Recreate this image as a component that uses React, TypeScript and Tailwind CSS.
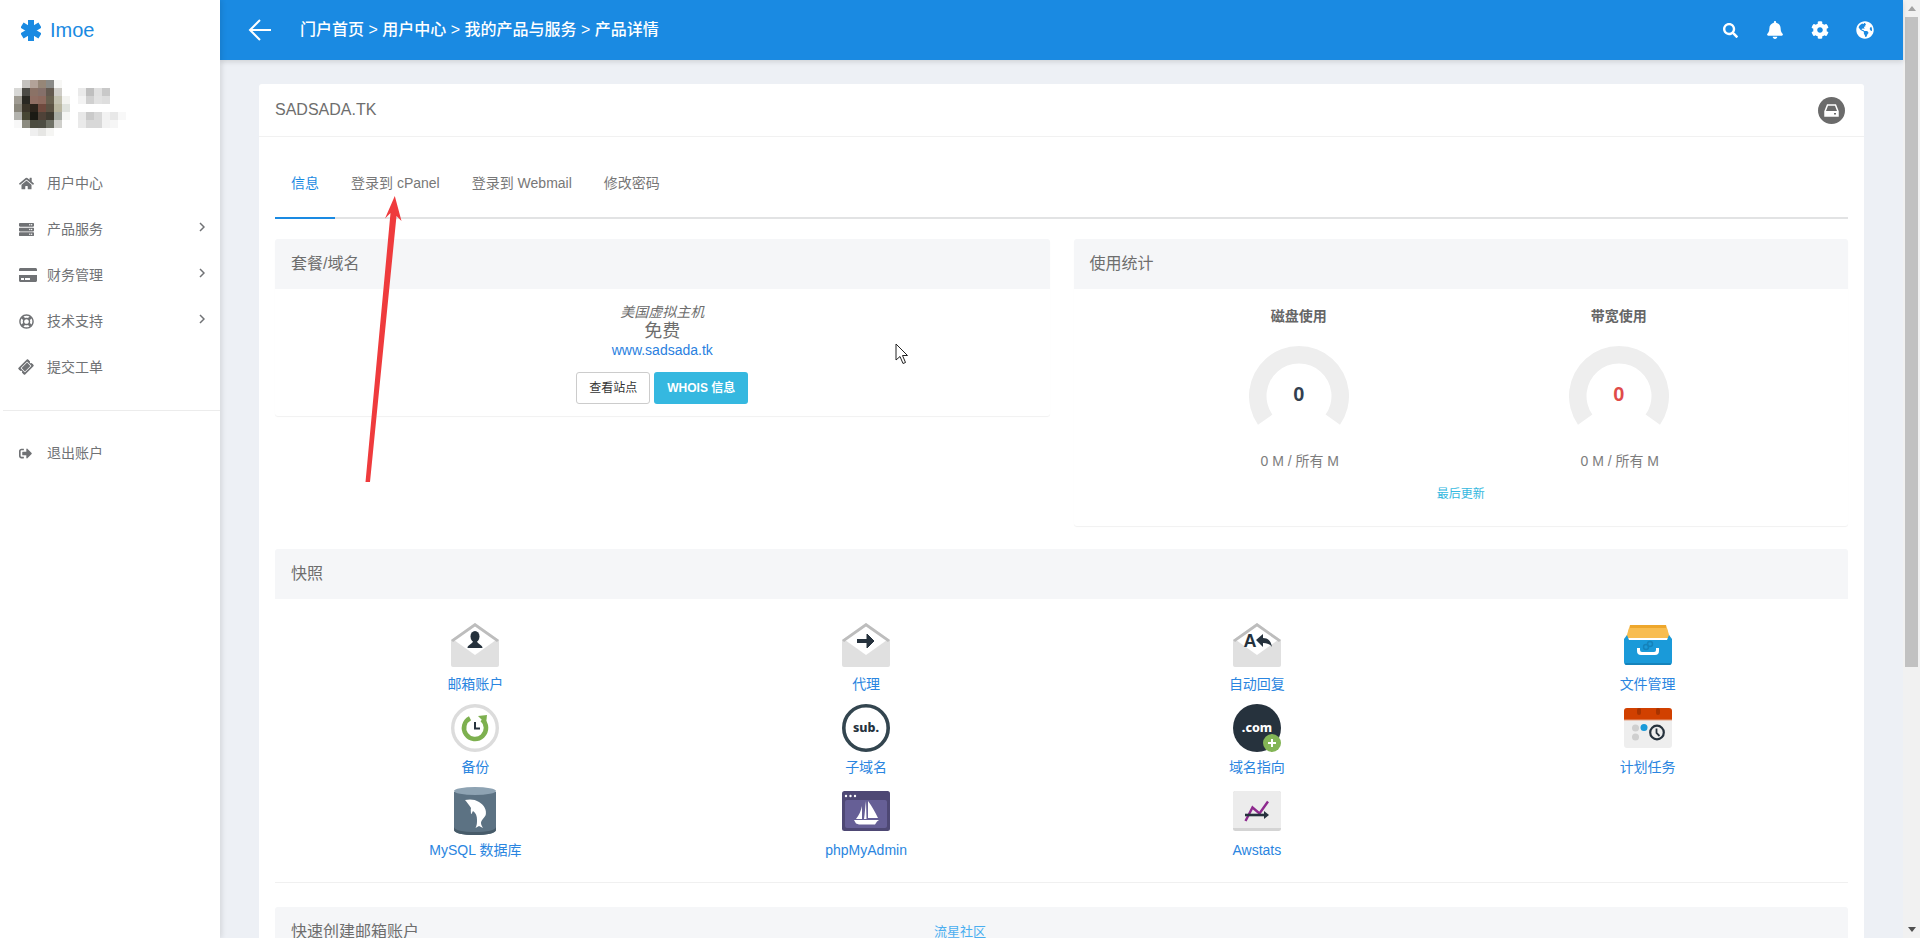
import React from "react";
import {
  FaBell, FaCog, FaCreditCard, FaGlobeAmericas, FaHome,
  FaRegLifeRing, FaSearch, FaServer, FaSignOutAlt, FaTicketAlt,
} from "react-icons/fa";

const avatar: [number, string[]][] = [
  [22, ["#c4c2bf", "#b3a298", "#968677", "#8a8a87", "#f7f7f5"]],
  [14, ["#d8d8d6", "#4c4b46", "#8b7266", "#85706a", "#63594f", "#cfcdc8"]],
  [14, ["#9f9b92", "#292822", "#8f6e63", "#8d6a5e", "#68604f", "#c3c1b0", "#f3f3f0"]],
  [14, ["#8a877c", "#3b3529", "#2c241c", "#6f4a3e", "#5b5243", "#b9b6a0", "#dfe2dd"]],
  [14, ["#b3b3ae", "#474633", "#1b1a14", "#4f4238", "#3f3b31", "#a8aca4", "#f5f6f3"]],
  [14, ["#f8f8f8", "#8c8b80", "#4c4c40", "#4d4d43", "#6f7166", "#d0d0cc"]],
  [30, ["#efefef", "#e6e6e4", "#f5f5f3"]],
];
const nameRows: [number, string[]][] = [
  [88, ["#eaeaea", "#bfbfbf", "#e0e0e0", "#c9c9c9"]],
  [96, ["#f3f3f3", "#d0d0d0", "#e2e2e2", "#dedede"]],
  [112, ["#e8e8e8", "#cacaca", "#d8d8d8", "#f2f2f2", "#e8e8e8", "#f8f8f8"]],
  [120, ["#eaeaea", "#d8d8d8", "#d8d8d8", "#f2f2f2", "#f6f6f6"]],
];

function Mosaic() {
  return (
    <svg width="120" height="64" viewBox="14 80 120 64" shapeRendering="crispEdges">
      {avatar.map(([x0, cols], r) =>
        cols.map((c, i) => <rect key={`${r}-${i}`} x={x0 + i * 8} y={80 + r * 8} width="8" height="8" fill={c} />),
      )}
      {nameRows.map(([y, cols]) =>
        cols.map((c, i) => <rect key={`${y}-${i}`} x={78 + i * 8} y={y} width="8" height="8" fill={c} />),
      )}
    </svg>
  );
}

const NAV = [
  { label: "用户中心", icon: <FaHome size={15} />, more: false },
  { label: "产品服务", icon: <FaServer size={15} />, more: true },
  { label: "财务管理", icon: <FaCreditCard size={18} />, more: true },
  { label: "技术支持", icon: <FaRegLifeRing size={15} />, more: true },
  { label: "提交工单", icon: <FaTicketAlt size={14} className="-rotate-45" />, more: false },
];

function NavRow({ label, icon, more }: { label: string; icon: React.ReactNode; more: boolean }) {
  return (
    <div className="flex h-[46px] items-center pl-[19px] pr-[15px] text-[14px] text-[#707275]">
      <span className="flex w-[28px] shrink-0 items-center">{icon}</span>
      <span className="flex-1">{label}</span>
      {more && (
        <svg width="6" height="10" viewBox="0 0 6 10" fill="none" stroke="currentColor" strokeWidth="1.500" className="-mt-[4px]">
          <path d="M1 1l4 4-4 4" />
        </svg>
      )}
    </div>
  );
}

function Sidebar() {
  return (
    <aside className="z-20 h-full w-[220px] shrink-0 bg-white shadow-[2px_0_5px_rgba(0,0,0,0.1)]">
      <div className="flex h-[60px] items-center pl-[21px] text-[#1a8ae2]">
        <svg width="20" height="21" viewBox="0 0 20 21" fill="none" stroke="currentColor" strokeWidth="6">
          <path d="M10 0v21M1 5l18 11M19 5 1 16" />
        </svg>
        <span className="ml-[9px] text-[20px]">Imoe</span>
      </div>
      <div className="h-[100px] pl-[14px] pt-[20px]">
        <Mosaic />
      </div>
      {NAV.map((n) => (
        <NavRow key={n.label} {...n} />
      ))}
      <div className="ml-[3px] mt-[20px] border-t border-[#ececec]" />
      <div className="mt-[19px]">
        <NavRow label="退出账户" icon={<FaSignOutAlt size={13} />} more={false} />
      </div>
    </aside>
  );
}

function Header() {
  return (
    <header className="z-10 flex h-[60px] shrink-0 items-center bg-[#1a8ae2] pl-[28px] pr-[29px] text-white shadow-[0_2px_5px_rgba(0,0,0,0.12)]">
      <svg width="24" height="24" viewBox="0 0 24 24" fill="none" stroke="white" strokeWidth="2">
        <path d="M23 12H2M12 2 2 12l10 10" />
      </svg>
      <span className="ml-[28px] flex-1 text-[16px] font-medium">门户首页 &gt; 用户中心 &gt; 我的产品与服务 &gt; 产品详情</span>
      <div className="flex items-center">
        <FaSearch size={15} />
        <FaBell size={18} className="ml-[28px]" />
        <FaCog size={18} className="ml-[27px]" />
        <FaGlobeAmericas size={18} className="ml-[27px]" />
      </div>
    </header>
  );
}

function PanelHead({ children }: { children: React.ReactNode }) {
  return <div className="flex h-[50px] items-center rounded-t-[3px] bg-[#f5f6f8] px-[16px] text-[16px] text-[#6e6e6e]">{children}</div>;
}

function Gauge({ title, valueClass }: { title: string; valueClass: string }) {
  return (
    <div className="flex w-[320px] flex-col items-center">
      <div className="text-[14px] font-bold leading-[20px] text-[#666]">{title}</div>
      <div className="relative mt-[20px] h-[79px] w-[100px]">
        <svg width="100" height="79" viewBox="0 0 100 79">
          <path d="M9 78.700 A50 50 0 1 1 91 78.700 L76.600 68.600 A32.500 32.500 0 1 0 23.400 68.600 Z" fill="#eeeeee" />
        </svg>
        <span className={`absolute left-0 top-[36px] w-full text-center text-[20px] font-bold leading-[24px] ${valueClass}`}>0</span>
      </div>
      <div className="ml-[2px] mt-[26px] text-[14px] leading-[20px] text-[#7d7d7d]">0 M / 所有 M</div>
    </div>
  );
}

const Env = ({ children }: { children: React.ReactNode }) => (
  <svg width="48" height="48" viewBox="0 0 48 48">
    <path d="M0 19 24 2l24 17v25a2 2 0 0 1-2 2H2a2 2 0 0 1-2-2Z" fill="#e0e0e0" />
    <path d="M3 19 24 5l21 14-21 15Z" fill="#fff" />
    <path d="M0 19 24 2l24 17-2 2L24 5.500 2 21Z" fill="#bdbdbd" />
    {children}
  </svg>
);

const D = "#26323d";

const icons: Record<string, React.ReactNode> = {
  mail: (
    <Env>
      <ellipse cx="24" cy="15.500" rx="4.500" ry="5.500" fill={D} />
      <path d="M16.500 27c0-3.500 5-3.500 5.500-7h4c.5 3.500 5.500 3.500 5.500 7Z" fill={D} />
    </Env>
  ),
  fwd: (
    <Env>
      <rect x="15" y="18" width="12" height="4" fill={D} />
      <path d="M25 13l7 7-7 7Z" fill={D} stroke={D} strokeLinejoin="round" />
    </Env>
  ),
  auto: (
    <Env>
      <text x="10.500" y="26" fontFamily="'Liberation Sans'" fontWeight="700" fontSize="18" fill={D}>A</text>
      <path d="M23 19l7-6v4c5 0 8 3 9 9-2-3-5-4-9-4v4Z" fill={D} />
    </Env>
  ),
  files: (
    <svg width="48" height="48" viewBox="0 0 48 48">
      <path d="M6 4h36l2 8H4Z" fill="#eea72c" />
      <path d="M5 7h38l3 10H2Z" fill="#f8bd50" />
      <path d="M3 14l2 5h38l2-5 3 4v23a3 3 0 0 1-3 3H3a3 3 0 0 1-3-3V18Z" fill="#1a9ad9" />
      <path d="M1 42h46l-.5 2h-45Z" fill="#1583bb" />
      <path d="M13 27v3a4 4 0 0 0 4 4h14a4 4 0 0 0 4-4v-3h-3v2a2 2 0 0 1-2 2H18a2 2 0 0 1-2-2v-2Z" fill="#fff" />
      <circle cx="22" cy="26" r="2.500" fill="none" stroke="#1583bb" strokeWidth="1.500" />
      <circle cx="26" cy="23" r="2.500" fill="none" stroke="#1583bb" strokeWidth="1.500" />
    </svg>
  ),
  backup: (
    <svg width="48" height="48" viewBox="0 0 48 48">
      <circle cx="24" cy="24" r="22.300" fill="#fff" stroke="#dcdcdc" strokeWidth="3.400" />
      <path d="M31 15.500A11 11 0 1 1 19 14.200" fill="none" stroke="#7db04f" strokeWidth="4.600" />
      <path d="M27 12l9-1-1 9Z" fill="#7db04f" />
      <path d="M24 18v6.500h5" fill="none" stroke={D} strokeWidth="2" />
    </svg>
  ),
  sub: (
    <svg width="48" height="48" viewBox="0 0 48 48">
      <circle cx="24" cy="24" r="22.200" fill="#fff" stroke="#33454f" strokeWidth="3.600" />
      <text x="24" y="27.500" textAnchor="middle" fontFamily="'Noto Sans'" fontWeight="800" fontSize="12.500" fill={D}>sub.</text>
    </svg>
  ),
  com: (
    <svg width="48" height="48" viewBox="0 0 48 48">
      <circle cx="24" cy="24" r="24" fill={D} />
      <text x="24" y="28" textAnchor="middle" fontFamily="'Noto Sans'" fontWeight="800" fontSize="12.500" fill="#fff">.com</text>
      <circle cx="39" cy="39" r="9" fill="#83b556" />
      <path d="M39 35v8M35 39h8" stroke="#fff" strokeWidth="2" />
    </svg>
  ),
  cron: (
    <svg width="48" height="48" viewBox="0 0 48 48">
      <rect y="4" width="48" height="40" rx="3" fill="#eeeeee" />
      <path d="M0 16V7a3 3 0 0 1 3-3h42a3 3 0 0 1 3 3v9Z" fill="#d14000" />
      <rect x="0" y="15.500" width="48" height="1" fill="#e8a080" />
      <rect x="13" y="4" width="4" height="7" rx="2" fill="#a83300" />
      <rect x="32" y="4" width="4" height="7" rx="2" fill="#a83300" />
      <circle cx="11.500" cy="24" r="3.500" fill="#cfcfcf" />
      <circle cx="20" cy="23.500" r="3.500" fill="#1a9ad9" />
      <circle cx="11.500" cy="33" r="3.500" fill="#cfcfcf" />
      <circle cx="33" cy="28.500" r="6.800" fill="none" stroke={D} strokeWidth="2.200" />
      <path d="M32.500 24.500v4.500l3 3" fill="none" stroke={D} strokeWidth="1.800" />
    </svg>
  ),
  mysql: (
    <svg width="48" height="48" viewBox="0 0 48 48">
      <path d="M3 5h42v38c0 3-9 5-21 5S3 46 3 43Z" fill="#5c7283" />
      <path d="M3 40c0 3 9 5 21 5s21-2 21-5v3c0 3-9 5-21 5S3 46 3 43Z" fill="#475b69" />
      <ellipse cx="24" cy="4" rx="21" ry="4" fill="#8ea3b3" />
      <path d="M14 13C18 12 24 12 28 15C33 18 36 23 34.700 28C33.500 31 30 33 30 36C30 38 31 39 32 41L28 39L24.500 41C26 38 26 36 26 33C26 29 25 26 22 24C21 25 21 27 20 27C20 25 19.500 23 20 21C18 18 16 15 14 13Z" fill="#fff" />
    </svg>
  ),
  pma: (
    <svg width="48" height="48" viewBox="0 0 48 48">
      <rect y="4" width="48" height="40" rx="2.500" fill="#4e4874" />
      <rect x="3" y="13" width="42" height="28" rx="2" fill="#665f96" />
      <circle cx="4" cy="9" r="1.200" fill="#fff" />
      <circle cx="8.500" cy="9" r="1.200" fill="#fff" />
      <circle cx="13" cy="9" r="1.200" fill="#fff" />
      <path d="M14 32c3-4 5-8 6-13v13ZM22 32c1-6 1-12 2-18l.5 18ZM26 14c4 5 7 11 10 17H26Z" fill="#fff" />
      <path d="M12 33h25l-2 1.500-2 3H17l-3-1Z" fill="#fff" />
    </svg>
  ),
  aw: (
    <svg width="48" height="48" viewBox="0 0 48 48">
      <rect y="4" width="48" height="40" rx="2.500" fill="#d4d4d4" />
      <path d="M0 6.500A2.500 2.500 0 0 1 2.500 4h43A2.500 2.500 0 0 1 48 6.500V41H0Z" fill="#ececec" />
      <path d="M12.500 34l7-13.500 7 6 8.500-12" fill="none" stroke="#8e2a8e" strokeWidth="2.400" />
      <path d="M12 28h20" stroke={D} strokeWidth="2.600" />
      <path d="M31 24l5 4-5 4Z" fill={D} />
    </svg>
  ),
};

const TILES = [
  ["mail", "邮箱账户"], ["fwd", "代理"], ["auto", "自动回复"], ["files", "文件管理"],
  ["backup", "备份"], ["sub", "子域名"], ["com", "域名指向"], ["cron", "计划任务"],
  ["mysql", "MySQL 数据库"], ["pma", "phpMyAdmin"], ["aw", "Awstats"],
];

function Card() {
  return (
    <div className="rounded-[3px] bg-white pb-[20px]">
      <div className="flex h-[53px] items-center justify-between border-b border-[#f1f1f1] pl-[16px] pr-[19px]">
        <span className="text-[16px] text-[#6e6e6e]">SADSADA.TK</span>
        <span className="flex h-[27px] w-[27px] items-center justify-center rounded-full bg-[#6b6b6b]">
          <svg width="15" height="13" viewBox="0 0 15 13">
            <path d="M3.500 1h8l2.500 6.500v4.500H1V7.500Z" fill="none" stroke="#fff" strokeWidth="1.500" />
            <rect x="1" y="7" width="13" height="5" fill="#fff" />
            <rect x="10" y="9" width="2" height="1.500" fill="#6b6b6b" />
          </svg>
        </span>
      </div>
      <div className="px-[16px]">
        <div className="mt-[23px] flex border-b-2 border-[#e2e3e4] text-[14px] text-[#777]">
          <span className="-mb-[2px] border-b-[2px] border-[#1a8ae2] px-[16px] pb-[23px] pt-[12px] leading-[22px] text-[#1a8ae2]">信息</span>
          <span className="px-[16px] pt-[12px] leading-[22px]">登录到 cPanel</span>
          <span className="px-[16px] pt-[12px] leading-[22px]">登录到 Webmail</span>
          <span className="px-[16px] pt-[12px] leading-[22px]">修改密码</span>
        </div>

        <div className="mt-[20px] flex items-start gap-[24px]">
          <section className="flex-1 rounded-[3px] shadow-[0_1px_1px_rgba(0,0,0,0.06)]">
            <PanelHead>套餐/域名</PanelHead>
            <div className="flex flex-col items-center pb-[12px] pt-[13px] text-[#6e6e6e]">
              <em className="text-[14px] leading-[20px]">美国虚拟主机</em>
              <span className="text-[18px] leading-[18px]">免费</span>
              <span className="text-[14px] leading-[20px] text-[#2a7fe0]">www.sadsada.tk</span>
              <div className="mt-[12px] flex gap-[4px] text-[12px]">
                <span className="flex h-[32px] w-[74px] items-center justify-center rounded-[3px] border border-[#ccc] bg-white text-[#333]">查看站点</span>
                <span className="flex h-[32px] w-[94px] items-center justify-center rounded-[3px] bg-[#35b8e0] font-bold text-white">WHOIS 信息</span>
              </div>
            </div>
          </section>
          <section className="flex-1 rounded-[3px] shadow-[0_1px_1px_rgba(0,0,0,0.06)]">
            <PanelHead>使用统计</PanelHead>
            <div className="flex flex-col items-center pb-[22px] pt-[17px]">
              <div className="flex justify-center pr-[4px]">
                <Gauge title="磁盘使用" valueClass="text-[#333f50]" />
                <Gauge title="带宽使用" valueClass="text-[#e04b4a]" />
              </div>
              <div className="mt-[13px] text-[12px] leading-[20px] text-[#35b8e0]">最后更新</div>
            </div>
          </section>
        </div>

        <section className="mt-[23px]">
          <PanelHead>快照</PanelHead>
          <div className="grid grid-cols-4 border-b border-[#f0f0f0] px-[5px] pb-[12px] pt-[22px]">
            {TILES.map(([k, label]) => (
              <div key={k} className="flex h-[83px] flex-col items-center">
                {icons[k]}
                <span className="mt-[5px] text-[14px] leading-[20px] text-[#2a85e0]">{label}</span>
              </div>
            ))}
          </div>
        </section>

        <section className="mt-[24px]">
          <PanelHead>
            <span>快速创建邮箱账户</span>
            <span className="ml-[515px] text-[13px] text-[#4aaef0]">流星社区</span>
          </PanelHead>
        </section>
      </div>
    </div>
  );
}

function Scrollbar() {
  return (
    <div className="flex h-full w-[17px] shrink-0 flex-col bg-[#f1f1f1]">
      <div className="flex h-[17px] items-center justify-center">
        <span className="border-x-[4px] border-b-[5px] border-x-transparent border-b-[#a3a3a3]" />
      </div>
      <div className="mx-[2px] h-[650px] bg-[#c1c1c1]" />
      <div className="flex-1" />
      <div className="flex h-[17px] items-center justify-center">
        <span className="border-x-[4px] border-t-[5px] border-x-transparent border-t-[#505050]" />
      </div>
    </div>
  );
}

export default function App() {
  return (
    <div className="relative flex h-[938px] w-[1920px] overflow-hidden bg-[#edf0f5] font-['Liberation_Sans','Noto_Sans_CJK_SC',sans-serif]">
      <Sidebar />
      <main className="flex h-full min-w-0 flex-1 flex-col">
        <Header />
        <div className="flex-1 overflow-hidden px-[39px] pt-[24px]">
          <Card />
        </div>
      </main>
      <Scrollbar />
      {/* annotation arrow drawn over the page */}
      <svg className="pointer-events-none absolute left-[360px] top-[190px] z-30" width="50" height="300" viewBox="360 190 50 300">
        <path d="M365.500 482 370 482 396.500 216 401.500 221 394.800 196 385 218.500 390.500 213Z" fill="#ef3b3d" />
      </svg>
      {/* mouse pointer over the page */}
      <svg className="pointer-events-none absolute left-[895px] top-[343px] z-30" width="14" height="22" viewBox="0 0 14 22">
        <path d="M1 1v16l4-3.500 3 7 2.500-1-3-7h5Z" fill="#fff" stroke="#222" strokeWidth="1" />
      </svg>
    </div>
  );
}
